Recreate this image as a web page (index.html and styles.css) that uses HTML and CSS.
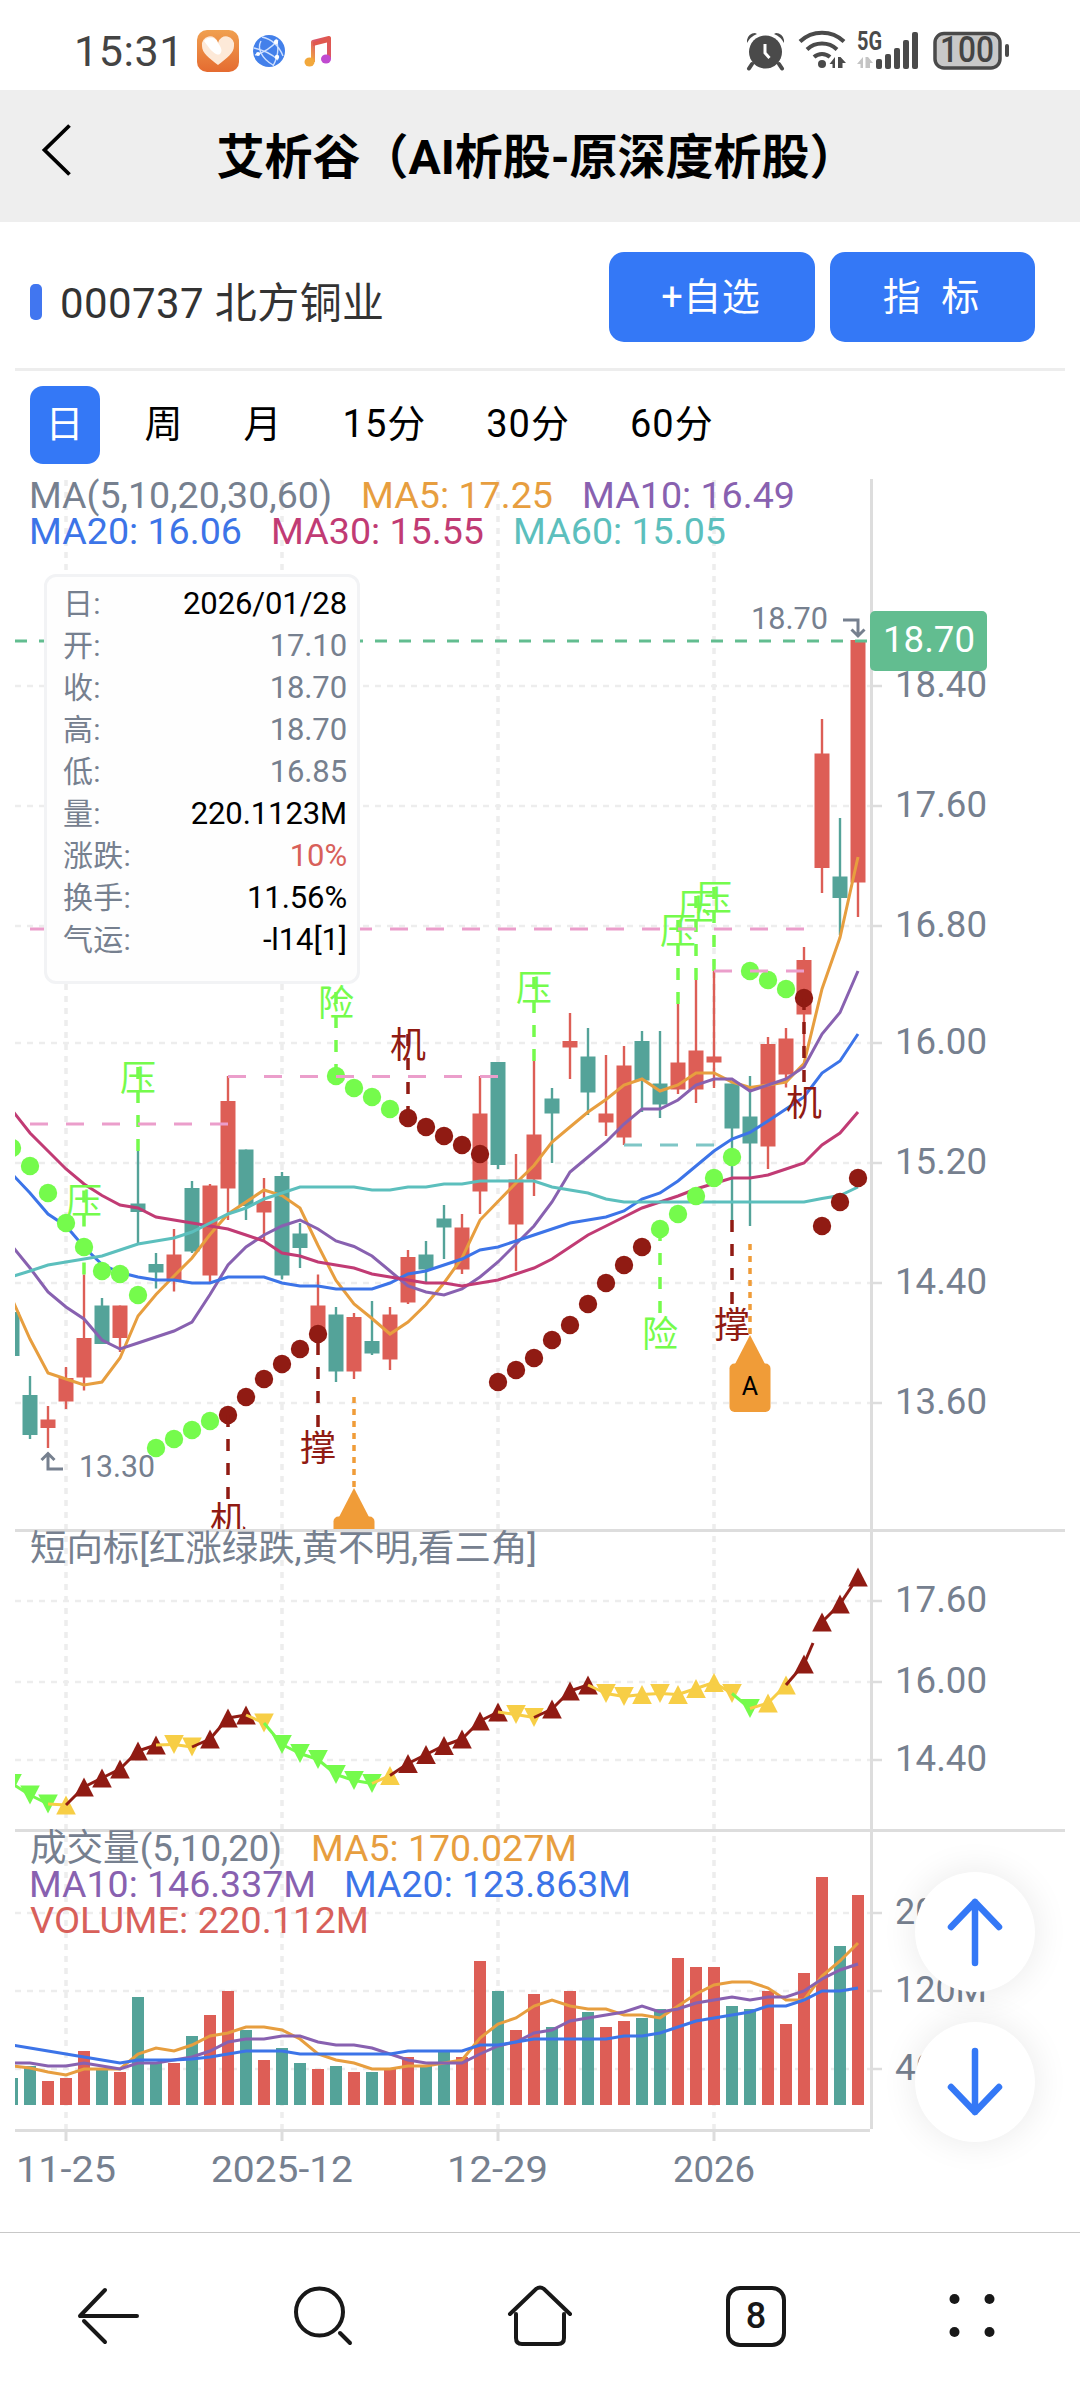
FILE: index.html
```
<!DOCTYPE html>
<html lang="zh-CN">
<head>
  <meta charset="UTF-8" />
  <title>艾析谷</title>
  <meta name="viewport" content="width=device-width, initial-scale=1.0">
  <link rel="stylesheet" href="styles.css">
</head>
<body>
  <div class="status-bar">
    <div class="status-left">
      <span class="clock">15:31</span>
      <svg class="app-icon" width="42" height="42" viewBox="0 0 42 42">
        <defs>
          <linearGradient id="orange" x1="0" y1="0" x2="0" y2="1"><stop offset="0" stop-color="#f0a050"/><stop offset="1" stop-color="#e56b30"/></linearGradient>
          <linearGradient id="note" x1="1" y1="0" x2="0" y2="1"><stop offset="0" stop-color="#e0584e"/><stop offset=".5" stop-color="#d9566c"/><stop offset="1" stop-color="#f2a83c"/></linearGradient>
        </defs>
        <rect width="42" height="42" rx="10" fill="url(#orange)"/>
        <path d="M21 35C12 28 5 23 5 16a8 8 0 0 1 16-3 8 8 0 0 1 16 3c0 7-7 12-16 19z" fill="#fde9d8"/>
        <path d="M7 11a8 8 0 0 1 14 2c3 4 5 8 2 11-3 2-7-2-10-5z" fill="#fff"/>
      </svg>
      <svg class="globe-icon" width="34" height="34" viewBox="0 0 34 34">
        <circle cx="17" cy="17" r="16" fill="#4380ea"/>
        <g fill="none" stroke="#cfe0ff" stroke-width="1.4"><path d="M10 3c9 2 17 9 21 19M3 21c8-2 17-8 23-15M9 7c-4 7 0 17 12 24M2 14c9 2 18 6 24 12M24 5c3 8 2 18-3 27"/></g>
        <g fill="#fff"><circle cx="24" cy="8" r="2.2"/><circle cx="6" cy="20" r="2"/><circle cx="25" cy="23" r="2.2"/></g>
      </svg>
      <svg class="music-icon" width="28" height="32" viewBox="0 0 28 32">
        <path d="M9 27V7l16-4v21" fill="none" stroke="url(#note)" stroke-width="4" stroke-linejoin="round"/>
        <path d="M9 7l16-4v4L9 11z" fill="#e0584e"/>
        <ellipse cx="5.5" cy="27" rx="5" ry="4.5" fill="#f2a83c"/><ellipse cx="22" cy="24" rx="5" ry="4.5" fill="#c04ad0"/>
      </svg>
    </div>
    <svg class="status-right" width="290" height="60" viewBox="0 0 290 60">
      <g fill="#4a4a4a">
        <circle cx="35.5" cy="32" r="16.5"/>
        <path d="M17 23a19 19 0 0 1 10-9l-2-1a8 8 0 0 0-8 7zM54 23a19 19 0 0 0-10-9l2-1a8 8 0 0 1 8 7z"/>
        <path d="M22 44l-3 4.500M49 44l3 4.500" stroke="#4a4a4a" stroke-width="4" stroke-linecap="round"/>
        <path d="M35 24v9l4.500 5" fill="none" stroke="#fff" stroke-width="3"/>
        <circle cx="92" cy="44" r="4"/>
        <path d="M105 37v11h-2.500v-4h-3zM108 37h2.500l5.500 6h-3.500v5H108z"/>
        <g fill="none" stroke="#4a4a4a" stroke-width="4"><path d="M70 21.500a32 32 0 0 1 44 0M77 29.500a22 22 0 0 1 30 0M84 37a12 12 0 0 1 16 0"/></g>
        <rect x="146" y="39" width="6" height="10" rx="2"/><rect x="155" y="34" width="6" height="15" rx="2"/><rect x="164" y="28" width="6" height="21" rx="2"/><rect x="173" y="20" width="6" height="29" rx="2"/><rect x="182" y="12" width="6" height="37" rx="2"/>
        <rect x="275" y="24" width="4" height="13" rx="2"/>
      </g>
      <path d="M133 37v11h-2.500v-4H127zM135.500 37h2.500l5 6h-3v5h-4.500z" fill="#c4c4c4"/>
      <text class="net" x="127" y="30" textLength="25" lengthAdjust="spacingAndGlyphs">5G</text>
      <rect x="205" y="13.500" width="65" height="34.500" rx="9" fill="#c8c8c8" stroke="#4a4a4a" stroke-width="3.500"/>
      <text class="battery" x="210" y="42" textLength="54" lengthAdjust="spacingAndGlyphs">100</text>
    </svg>
  </div>

  <header class="title-bar">
    <svg class="back" width="36" height="56" viewBox="0 0 36 56"><path d="M30.500 3.500L5.500 28l25 24.500" fill="none" stroke="#000" stroke-width="3.800"/></svg>
    <h1>艾析谷（AI析股-原深度析股）</h1>
  </header>

  <section class="stock">
    <div class="stock-name">000737 北方铜业</div>
    <button class="btn">+自选</button>
    <button class="btn">指&nbsp; 标</button>
  </section>

  <nav class="tabs">
    <span class="tab active">日</span>
    <span class="tab">周</span>
    <span class="tab">月</span>
    <span class="tab">15分</span>
    <span class="tab">30分</span>
    <span class="tab">60分</span>
  </nav>

  <main class="chart-box">
    <svg id="chart" width="1080" height="1760" viewBox="0 472 1080 1760"></svg>
    <div class="tooltip">
      <div><span>日:</span><b>2026/01/28</b></div>
      <div><span>开:</span><b class="gray">17.10</b></div>
      <div><span>收:</span><b class="gray">18.70</b></div>
      <div><span>高:</span><b class="gray">18.70</b></div>
      <div><span>低:</span><b class="gray">16.85</b></div>
      <div><span>量:</span><b>220.1123M</b></div>
      <div><span>涨跌:</span><b class="red">10%</b></div>
      <div><span>换手:</span><b>11.56%</b></div>
      <div><span>气运:</span><b>-l14[1]</b></div>
    </div>
    <div class="float-btns">
      <button><svg width="60" height="76" viewBox="0 0 60 76"><path d="M30 69V8M6 33L30 8l24 25"/></svg></button>
      <button><svg width="60" height="76" viewBox="0 0 60 76"><path d="M30 7v61M6 43l24 25 24-25"/></svg></button>
    </div>
  </main>

  <footer class="bottom-bar">
    <svg viewBox="0 0 80 80"><path d="M12 40h57M12 40l25-26M16 45l21 21"/></svg>
    <svg viewBox="0 0 80 80"><circle cx="35.500" cy="36" r="23.500"/><path d="M56 57l10 10"/></svg>
    <svg viewBox="0 0 80 80"><path d="M10 38l26-25q4-3 8 0l26 25M16 38v24q0 6 6 6h36q6 0 6-6V38"/></svg>
    <svg viewBox="0 0 80 80"><rect x="12" y="12" width="56" height="57" rx="12"/><text x="40" y="52">8</text></svg>
    <svg viewBox="0 0 80 80" class="dots"><circle cx="22.500" cy="23" r="5"/><circle cx="57.500" cy="23" r="5"/><circle cx="22.500" cy="56" r="5"/><circle cx="57.500" cy="56" r="5"/></svg>
  </footer>

  <script src="chart.js"></script>
</body>
</html>
```
FILE: styles.css
```
* {
  box-sizing: border-box;
}

body {
  margin: 0;
  width: 1080px;
  height: 2400px;
  display: flex;
  flex-direction: column;
  background: #fff;
  font-family: Roboto, "Noto Sans CJK SC", sans-serif;
  color: #000;
  overflow: hidden;
}

button {
  border: none;
  font-family: inherit;
}

.status-bar {
  height: 90px;
  padding: 20px 60px 0 74px;
  display: flex;
  justify-content: space-between;
}

.status-left {
  display: flex;
  align-items: center;
  height: 62px;
}

.clock {
  width: 123px;
  font-size: 43px;
  letter-spacing: 0.6px;
  color: #444;
}

.globe-icon {
  margin-left: 13px;
}

.music-icon {
  margin-left: 18px;
}

.net {
  font-size: 25px;
  font-weight: 700;
  fill: #4a4a4a;
}

.battery {
  font-size: 37px;
  font-weight: 500;
  fill: #444;
}

.title-bar {
  height: 132px;
  padding: 0 45px 0 39px;
  display: grid;
  grid-template-columns: 36px 1fr 36px;
  align-items: center;
  background: #eee;
}

.title-bar .back {
  margin-top: -12px;
}

.title-bar h1 {
  margin: 3px 0 0;
  font-size: 48px;
  line-height: 60px;
  font-weight: 700;
  text-align: center;
  white-space: nowrap;
}

.stock {
  height: 149px;
  margin: 0 15px;
  padding: 30px 30px 26px 15px;
  display: flex;
  align-items: flex-start;
  gap: 15px;
  border-bottom: 3px solid #ededed;
}

.stock-name {
  flex: 1;
  display: flex;
  align-items: center;
  height: 100px;
  padding-bottom: 5px;
  font-size: 42px;
  letter-spacing: 0.4px;
  color: #333;
}

.stock-name::before {
  content: "";
  width: 12px;
  height: 36px;
  margin: 5px 18px 0 0;
  border-radius: 5px;
  background: #4176f0;
}

.btn {
  width: 205.500px;
  height: 90px;
  padding: 0 2px 8px 0;
  border-radius: 15px;
  background: #3478f6;
  color: #fff;
  font-size: 38px;
  letter-spacing: 0.5px;
}

.tabs {
  height: 101px;
  padding: 15px 30px 8px;
  display: flex;
  gap: 29px;
}

.tab {
  height: 78px;
  padding: 0 15.500px;
  border-radius: 13px;
  font-size: 38px;
  letter-spacing: 1px;
  line-height: 77px;
}

.tab.active {
  background: #3478f6;
  color: #fff;
}

.chart-box {
  position: relative;
  height: 1760px;
}

#chart {
  display: block;
}

#chart text {
  fill: #76808f;
  font-size: 37px;
}

/* overlays the top left corner of the chart */
.tooltip {
  position: absolute;
  left: 44px;
  top: 102px;
  width: 316px;
  height: 410px;
  padding: 6px 10px 0 16px;
  border: 3px solid #f2f3f5;
  border-radius: 12px;
  background: #fefefe;
}

.tooltip div {
  display: flex;
  justify-content: space-between;
  height: 42px;
  line-height: 42px;
  font-size: 30px;
  letter-spacing: 0.3px;
  color: #76808f;
}

.tooltip b {
  font-weight: 400;
  font-size: 31px;
  letter-spacing: -0.1px;
  color: #000;
}

.tooltip .gray {
  color: #76808f;
}

.tooltip .red {
  color: #d8605a;
}

.float-btns {
  position: absolute;
  left: 915px;
  top: 1400px;
  display: flex;
  flex-direction: column;
  gap: 30px;
}

.float-btns button {
  width: 120px;
  height: 120px;
  padding: 0;
  border-radius: 50%;
  background: #fff;
  box-shadow: 0 0 36px rgba(0, 0, 0, 0.09);
}

.float-btns svg {
  display: block;
  margin: 0 auto;
  fill: none;
  stroke: #3478f6;
  stroke-width: 6.500;
  stroke-linecap: round;
  stroke-linejoin: round;
}

.bottom-bar {
  height: 168px;
  padding-bottom: 2px;
  display: grid;
  grid-template-columns: repeat(5, 216px);
  align-items: center;
  justify-items: center;
  border-top: 1px solid #c8c8c8;
}

.bottom-bar svg {
  width: 80px;
  height: 80px;
  fill: none;
  stroke: #181818;
  stroke-width: 4;
  stroke-linecap: round;
}

.bottom-bar text {
  fill: #181818;
  stroke: none;
  font-size: 36px;
  font-weight: 500;
  text-anchor: middle;
}

.bottom-bar .dots {
  fill: #181818;
  stroke: none;
}
```
FILE: chart.js
```
const svg = document.getElementById("chart");
const RED = "#dd5e56", TEAL = "#54a399", GREEN = "#75fb4c", DARK = "#901b13", YELLOW = "#f7ce46";
const ORANGE = "#e79e3f", PURPLE = "#8861b0", BLUE = "#3c74e8", ROSE = "#c13b74", CYAN = "#5cbfbd";
const X = i => 12 + i * 18;

// [colour, high, body top, body bottom, low]
const candles = [
  "G 1312 1312 1356 1356", "G 1376 1395 1435 1439", "R 1406 1419.5 1428 1448", "R 1367 1378 1401.5 1409",
  "R 1274.5 1338 1377.5 1390.5", "G 1298 1305.5 1344 1344", "R 1305.5 1305.5 1338 1352", "G 1151 1203.5 1212 1244",
  "G 1253 1264 1272.5 1288.5", "R 1229 1254.5 1281 1291.5", "G 1181 1188 1251.5 1253", "R 1184 1185.5 1275.5 1283",
  "R 1076 1101 1188.5 1220", "G 1149.5 1149.5 1206 1220", "R 1178 1201 1212.5 1241", "G 1172 1176 1275.5 1279.5",
  "G 1223 1233.5 1248 1268", "R 1274.5 1305.5 1334 1343", "G 1307 1314.5 1371.5 1382", "R 1313 1317 1371.5 1379",
  "G 1301 1341 1353.5 1355", "R 1307 1314.5 1359.5 1370", "R 1250 1257 1302.5 1304", "G 1241 1254.5 1269.5 1282",
  "G 1205 1218.5 1227.5 1259", "R 1214 1227.5 1269.5 1274", "R 1076 1113.5 1191.5 1214", "G 1062 1062 1165 1169",
  "R 1154 1179.5 1224.5 1271", "R 1061 1134.5 1179.5 1196", "G 1088 1098.5 1113.5 1163", "R 1013 1041 1047.5 1079",
  "G 1028 1056.5 1092.5 1115", "R 1055 1113.5 1122.5 1136", "R 1046 1065.5 1137.5 1145", "G 1031 1041 1080.5 1112",
  "G 1031 1083.5 1104.5 1118", "R 1004 1062.5 1089.5 1094", "R 980 1050.5 1089.5 1103", "R 971 1056.5 1062.5 1088",
  "G 1083.5 1083.5 1128.5 1220", "G 1076 1116.5 1143.5 1226", "R 1037 1044 1146.5 1169", "R 1028 1038.5 1074.5 1087.5",
  "R 947 960 1014.5 1056", "R 719 753.5 868 893", "G 818 876.5 898 935", "R 640 640 882.5 917"
].map(s => s.split(" "));

const maLines = [
  [ORANGE, [1299,1339,1373,1379,1385,1382,1358,1316,1294.5,1276,1258,1234.5,1214,1202,1190,1195.5,1208,1245.5,1280.5,1304,1318.5,1334,1322,1304.5,1283,1258,1220,1201.5,1183,1165.5,1142,1127,1112,1099.5,1085,1079,1091,1085,1073,1073,1082,1087.5,1085,1082,1063.5,989,937.5,857]],
  [PURPLE, [1246,1268,1292,1307,1319,1340,1349,1343,1337,1331,1322,1294.5,1265,1247,1235,1226,1220,1229,1241,1246.5,1256,1271,1286,1292,1295,1289,1277,1262,1244,1226,1202,1172,1157,1142,1124,1109,1109,1100,1085,1079,1079,1091,1085,1079,1067,1034,1012.5,971]],
  [BLUE, [1174,1193,1214,1226,1247,1264.5,1272.5,1277,1280,1280,1283,1283,1277,1277,1277,1283,1286,1286,1289,1289,1289,1283,1274,1271,1265,1259,1250,1247,1241,1235,1229,1223,1220,1217,1211,1199,1193,1181,1166,1151,1139,1132.5,1121,1109,1097,1073,1061,1034]],
  [ROSE, [1110,1133,1151,1169,1184,1195.5,1205,1208,1217,1220,1223,1226,1229,1235,1241,1253,1256,1262,1265,1268,1274,1277,1280,1283,1283,1286,1283,1280,1274,1268,1259,1247,1235,1226,1217,1208,1202,1196,1189,1183.5,1178,1178,1175,1169,1163,1145,1133,1112]],
  [CYAN, [1276.5,1271,1265,1262,1259,1256,1250,1244,1241,1238,1232,1223,1214,1208,1199,1193,1187,1187,1187,1187,1190,1190,1187,1187,1184,1184,1181,1181,1181,1181,1187,1190,1193,1199,1202,1202,1202,1202,1202,1202,1202,1202,1202,1202,1202,1198.5,1195.5,1187]]
];

// trend dots: [start index, colour, y values]
const dots = [
  [0, GREEN, [1148,1166,1193,1223,1247,1271,1274,1295]],
  [8, GREEN, [1448,1439,1430,1421]],
  [12, DARK, [1415,1397,1379,1364,1349,1334]],
  [18, GREEN, [1076,1088,1097,1109]],
  [22, DARK, [1118,1127,1136,1145,1154]],
  [27, DARK, [1382,1370,1358,1340,1325,1304,1283,1265,1247]],
  [36, GREEN, [1229,1214,1196,1178,1157]],
  [41, GREEN, [971,980,989]],
  [44, DARK, [998]],
  [45, DARK, [1226,1202,1178]]
];

// [index, y, text, colour, direction]
const marks = [
  [7, 1151, "压", GREEN, -1], [4, 1274.5, "压", GREEN, -1], [29, 1061, "压", GREEN, -1],
  [37, 1004, "压", GREEN, -1], [38, 980, "压", GREEN, -1], [39, 971, "压", GREEN, -1],
  [18, 1076, "险", GREEN, -1], [22, 1118, "机", DARK, -1], [12, 1415, "机", DARK, 1],
  [17, 1343, "撑", DARK, 1], [36, 1229, "险", GREEN, 1], [40, 1220, "撑", DARK, 1], [44, 998, "机", DARK, 1]
];

const trend = "G-1783.5 G-1795 G-1804 Y+1805 R+1787 R+1778 R+1769 R+1751 R+1745 Y-1744.5 Y-1747 R+1739 R+1718 R+1715 Y-1723 G-1744.5 G-1753.5 G-1759.5 G-1774.5 G-1780.5 G-1783.5 Y+1775.5 R+1763.5 R+1754.5 R+1745.5 R+1739 R+1721 R+1712 Y-1714.5 Y-1717.5 R+1709 R+1691 R+1685 Y-1693.5 Y-1696.5 Y+1694.5 Y-1693.5 Y+1694.5 Y+1688.5 Y+1682.5 Y-1693.5 G-1708.5 Y+1703 Y+1685 R+1664 R+1622 R+1604 R+1577".split(" ");

const volumes = [2078,2066,2081,2078,2051,2068,2072,1997,2062,2063,2036,2015,1991,2030,2060,2048,2063,2069,2066,2072,2072,2069,2057,2066,2051,2057,1961,1991,2030,1994,2027,1991,2012,2027,2021,2018,2009,1958,1967,1967,2006,2009,1991,2024,1973,1877,1946,1895];

const volLines = [
  [ORANGE, [2066,2068,2072,2075,2069,2069,2069,2054,2048,2051,2045,2036,2033,2027,2027,2030,2039,2054,2060,2063,2069,2069,2066,2066,2063,2060,2038,2024,2018,2006,2000,2006,2009,2009,2015,2015,2018,2006,1994,1985,1982,1982,1988,2000,2000,1976,1961,1943]],
  [PURPLE, [2063,2063,2066,2066,2063,2066,2069,2063,2063,2060,2057,2051,2042,2039,2039,2036,2036,2042,2045,2045,2048,2054,2060,2063,2063,2063,2054,2046,2042,2033,2030,2021,2018,2015,2012,2006,2012,2009,2003,2000,1997,2000,1997,1997,1991,1979,1970,1964]],
  [BLUE, [2045,2048,2051,2054,2057,2060,2063,2060,2060,2060,2059,2057,2054,2051,2051,2051,2054,2054,2054,2054,2054,2054,2051,2051,2051,2051,2045,2045,2042,2039,2039,2039,2039,2039,2036,2036,2033,2027,2021,2018,2015,2012,2006,2006,2000,1991,1991,1988]]
];

let out = "";
const line = (x1, y1, x2, y2, color, w = 3, dash = "") =>
  `<line x1="${x1}" y1="${y1}" x2="${x2}" y2="${y2}" stroke="${color}" stroke-width="${w}" stroke-dasharray="${dash}"/>`;
const rect = (x, y, w, h, color, r = 0) => `<rect x="${x}" y="${y}" width="${w}" height="${h}" rx="${r}" fill="${color}"/>`;
const poly = ([color, ys]) =>
  `<polyline points="${ys.map((y, i) => X(i) + "," + y).join(" ")}" fill="none" stroke="${color}" stroke-width="3"/>`;
const text = (s, x1, x2, y, color = "#76808f", size = 37) =>
  `<text x="${x1}" y="${y}" textLength="${x2 - x1}" lengthAdjust="spacingAndGlyphs" style="fill:${color};font-size:${size}px">${s}</text>`;

out += `<defs><clipPath id="main"><rect x="15" y="472" width="855" height="1057"/></clipPath>
  <clipPath id="plot"><rect x="15" y="1532" width="855" height="600"/></clipPath></defs>`;

// grid
const rows = [[686, "18.40"], [806, "17.60"], [926, "16.80"], [1043, "16.00"], [1163, "15.20"], [1283, "14.40"], [1403, "13.60"],
  [1601, "17.60"], [1682, "16.00"], [1760, "14.40"], [1913, "200M"], [1991, "120M"], [2069, "40M"]];
rows.forEach(([y]) => out += line(15, y, 870, y, "#ededed", 2.5, "6 6"));
[66, 282, 498, 714].forEach(x => out += line(x, 480, x, 2129, "#ededed", 3.5, "6 6"));

// candles
out += '<g clip-path="url(#main)">';
candles.forEach(([c, h, t, b, l], i) => {
  const color = c === "R" ? RED : TEAL;
  out += line(X(i), h, X(i), l, color, 2.4) + rect(X(i) - 7.5, t, 15, b - t, color);
});
maLines.forEach(l => out += poly(l));
dots.forEach(([start, color, ys]) => ys.forEach((y, i) =>
  out += `<circle cx="${X(start + i)}" cy="${y}" r="9.2" fill="${color}"/>`));
marks.forEach(([i, y, s, color, dir]) => {
  out += line(X(i), y, X(i), y + dir * 84, color, 3.5, "12 12");
  const mid = dir < 0 ? y - 73.5 : y + 105;
  out += `<text x="${X(i)}" y="${mid + 13}" text-anchor="middle" style="fill:${color};font-size:36px">${s}</text>`;
});
out += line(30, 1124, 228, 1124, "#eb9ecb", 3, "18 18");
out += line(228, 1076.5, 498, 1076.5, "#eb9ecb", 3, "18 18");
out += line(30, 929, 804, 929, "#eb9ecb", 3, "18 18");
out += line(714, 971, 804, 971, "#eb9ecb", 3, "18 18");
out += line(624, 1145, 714, 1145, "#7fc6c6", 3, "18 18");

// signal flags
[[354, 1397], [750, 1244]].forEach(([x, y]) => {
  const f = "#f09c38";
  out += line(x, y, x, y + 91, f, 3.5, "6 6");
  out += `<path d="M${x} ${y + 91}l15.500 30h-31z" fill="${f}"/>` + rect(x - 20.5, y + 119.5, 41, 48.5, f, 5);
  out += `<text x="${x}" y="${y + 151}" text-anchor="middle" style="fill:#000;font-size:25px">A</text>`;
});
out += line(15, 641, 867, 641, "#62bd90", 3, "12 12");
out += "</g>";

// high / low price
out += text("18.70", 751, 828, 629, "#76808f", 31) + text("13.30", 79, 155, 1477, "#76808f", 31);
out += '<path d="M843 620h15v16M851.500 629.500l6.500 6.500 6.500-6.500M63 1469H48v-15M41.500 1460l6.500-6.500 6.500 6.500" fill="none" stroke="#76808f" stroke-width="3"/>';

// trend
const names = { R: DARK, G: GREEN, Y: YELLOW };
out += '<g clip-path="url(#plot)">';
trend.forEach((p, i) => {
  const y = +p.slice(2), s = p[1] === "+" ? 1 : -1;
  out += `<path d="M${X(i)} ${y - 9.5 * s}L${X(i) + 9.8} ${y + 9.5 * s}H${X(i) - 9.8}z" fill="${names[p[0]]}"/>`;
});
for (let i = 1; i < trend.length; i++) {
  const y1 = +trend[i - 1].slice(2), y2 = +trend[i].slice(2);
  const k = i === 45 ? 0.5 : 1;
  out += line(X(i - 1), y1, X(i - 1) + 18 * k, y1 + (y2 - y1) * k, names[trend[i][0]]);
}

// volume
volumes.forEach((y, i) => out += rect(X(i) - 6, y, 12, 2105 - y, candles[i][0] === "R" ? RED : TEAL));
volLines.forEach(l => out += poly(l));
out += "</g>";

// axes
out += line(871.5, 479, 871.5, 2129, "#ddd") + line(15, 1530.5, 1065, 1530.5, "#ddd") +
  line(15, 1830.5, 1065, 1830.5, "#ddd") + line(15, 2130.5, 870, 2130.5, "#ddd");
rows.forEach(([y, s]) => {
  out += line(873, y, 882, y, "#ddd", 2.5);
  out += text(s, 895, s === "40M" ? 969 : 987, y + 11);
});
out += rect(870, 611, 117, 60, "#62bd90", 5) + text("18.70", 883, 975, 652, "#fff");
[[66, "11-25", 16, 116], [282, "2025-12", 211, 353], [498, "12-29", 447, 548], [714, "2026", 673, 755]].forEach(([x, s, a, b]) =>
  out += line(x, 2132, x, 2141, "#ddd") + text(s, a, b, 2182));

// legends
out += text("MA(5,10,20,30,60)", 29, 332, 508) + text("MA5: 17.25", 361, 553, 508, ORANGE) + text("MA10: 16.49", 582, 795, 508, PURPLE);
out += text("MA20: 16.06", 29, 242, 544, BLUE) + text("MA30: 15.55", 271, 484, 544, ROSE) + text("MA60: 15.05", 513, 726, 544, CYAN);
out += text("短向标[红涨绿跌,黄不明,看三角]", 30, 537, 1561, "#76808f", 36);
out += text("成交量(5,10,20)", 30, 282, 1861) + text("MA5: 170.027M", 311, 577, 1861, ORANGE);
out += text("MA10: 146.337M", 29, 316, 1897, PURPLE) + text("MA20: 123.863M", 344, 631, 1897, BLUE);
out += text("VOLUME: 220.112M", 30, 369, 1933, "#d8605a");

svg.innerHTML = out;
```
